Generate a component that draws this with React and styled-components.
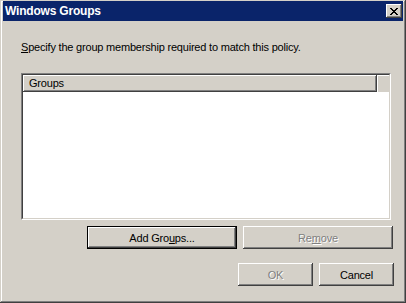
import React from "react";
import styled, { createGlobalStyle, css } from "styled-components";

const Global = createGlobalStyle`
  html, body { margin: 0; padding: 0; background: #d4d0c8; }
  body { font-family: Tahoma, "Liberation Sans", "DejaVu Sans", sans-serif; font-size: 11px; letter-spacing: -0.2px; }
`;

const Window = styled.div`
  box-sizing: border-box;
  width: 406px;
  height: 303px;
  padding: 1px 3px 3px 3px;
  background: #d4d0c8;
  box-shadow: inset -1px -1px #404040, inset 1px 1px #d4d0c8,
    inset -2px -2px #808080, inset 2px 2px #ffffff;
  display: flex;
  flex-direction: column;
`;

const TitleBar = styled.div`
  height: 20px;
  background: #0a246a;
  display: flex;
  align-items: center;
  justify-content: space-between;
  padding: 0 1px 0 2px;
`;

const Title = styled.span`
  color: #fff;
  font-family: "Liberation Sans", Arial, sans-serif;
  font-weight: bold;
  font-size: 12px;
  letter-spacing: -0.2px;
`;

const CloseBtn = styled.div`
  box-sizing: border-box;
  width: 16px;
  height: 14px;
  background: #d4d0c8;
  box-shadow: inset -1px -1px #404040, inset 1px 1px #ffffff,
    inset -2px -2px #808080;
  display: flex;
  align-items: center;
  justify-content: center;
`;

const Body = styled.div`
  flex: 1;
  display: flex;
  flex-direction: column;
  padding: 0 10px 0 18px;
`;

const Prompt = styled.div`
  margin-top: 20px;
  height: 13px;
  line-height: 13px;
  color: #000;
`;

const U = styled.span`
  text-decoration: underline;
`;

const List = styled.div`
  margin-top: 19px;
  width: 370px;
  height: 147px;
  box-sizing: border-box;
  background: #fff;
  border: 1px solid;
  border-color: #808080 #ffffff #ffffff #808080;
  display: flex;
  flex-direction: column;
`;

const ListInner = styled.div`
  flex: 1;
  border: 1px solid;
  border-color: #404040 #d4d0c8 #d4d0c8 #404040;
  display: flex;
  flex-direction: column;
`;

const HeaderRow = styled.div`
  height: 17px;
  display: flex;
  background: #d4d0c8;
`;

const HeaderCell = styled.div`
  box-sizing: border-box;
  width: ${(p) => p.$w}px;
  height: 17px;
  padding-left: 6px;
  line-height: 16px;
  color: #000;
  box-shadow: inset -1px -1px #404040, inset 1px 1px #ffffff,
    inset -2px -2px #808080;
`;

const HeaderFill = styled.div`
  flex: 1;
  box-shadow: inset 1px 1px #ffffff;
`;

const Row = styled.div`
  display: flex;
  justify-content: flex-end;
  gap: 6px;
  margin-top: ${(p) => p.$mt}px;
  margin-right: ${(p) => p.$mr}px;
`;

const Button = styled.div`
  box-sizing: border-box;
  width: ${(p) => p.$w}px;
  height: 23px;
  display: flex;
  align-items: center;
  justify-content: center;
  background: #d4d0c8;
  color: #000;
  box-shadow: inset -1px -1px #404040, inset 1px 1px #ffffff,
    inset -2px -2px #808080;
  ${(p) =>
    p.$default &&
    css`
      box-shadow: inset 0 0 0 1px #000, inset -2px -2px #404040,
        inset 2px 2px #ffffff, inset -3px -3px #808080;
    `}
  ${(p) =>
    p.$disabled &&
    css`
      color: #808080;
      text-shadow: 1px 1px #ffffff;
    `}
`;

export default function App() {
  return (
    <>
      <Global />
      <Window>
        <TitleBar>
          <Title>Windows Groups</Title>
          <CloseBtn>
            <svg width="8" height="7" viewBox="0 0 8 7">
              <path
                d="M0 0h2v1h1v1h2v-1h1v-1h2v1h-1v1h-1v1h-1v1h1v1h1v1h1v1h-2v-1h-1v-1h-2v1h-1v1h-2v-1h1v-1h1v-1h1v-1h-1v-1h-1v-1h-1z"
                fill="#000"
              />
            </svg>
          </CloseBtn>
        </TitleBar>
        <Body>
          <Prompt>
            <U>S</U>pecify the group membership required to match this policy.
          </Prompt>
          <List>
            <ListInner>
              <HeaderRow>
                <HeaderCell $w={354}>Groups</HeaderCell>
                <HeaderFill />
              </HeaderRow>
            </ListInner>
          </List>
          <Row $mt={6} $mr={0}>
            <Button $w={150} $default>
              <span>
                Add Gro<U>u</U>ps...
              </span>
            </Button>
            <Button $w={150} $disabled>
              <span>
                Re<U>m</U>ove
              </span>
            </Button>
          </Row>
          <Row $mt={14} $mr={-1}>
            <Button $w={75} $disabled>OK</Button>
            <Button $w={75}>Cancel</Button>
          </Row>
        </Body>
      </Window>
    </>
  );
}
